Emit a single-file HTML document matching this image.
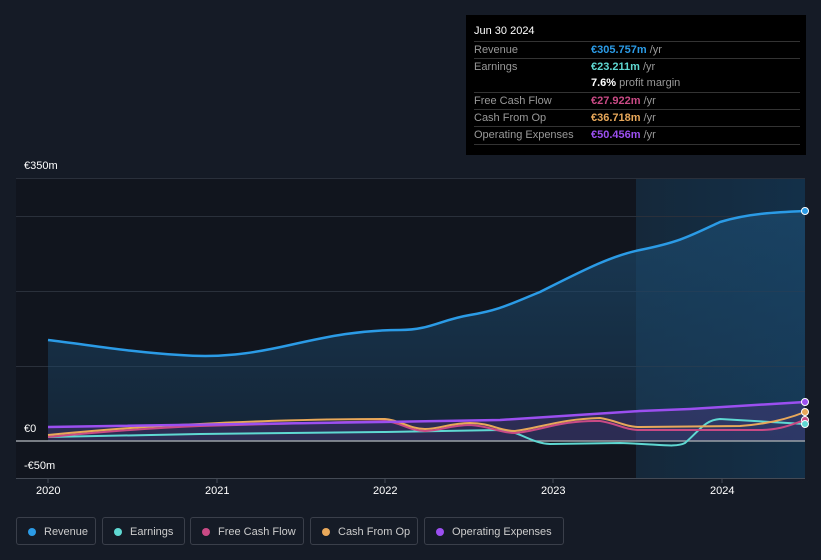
<!DOCTYPE html>
<html><head><style>
body{margin:0;width:821px;height:560px;background:#151b26;font-family:"Liberation Sans",sans-serif;overflow:hidden;position:relative}
.tip{position:absolute;left:466px;top:15px;width:340px;height:140px;background:#000;color:#fff;font-size:11px}
.tip .h{position:absolute;left:8px;top:10px;font-size:11px}
.row{position:absolute;left:8px;width:326px;height:17px;border-top:1px solid #333;line-height:17px;color:#999}
.row span{position:absolute;left:117px}
.lbl{position:absolute;color:#fff;font-size:11px}
.leg{position:absolute;top:517px;height:28px;border:1px solid #3a3f4a;border-radius:3px;color:#ccc;font-size:11px;line-height:28px;box-sizing:border-box;padding-left:27px}
.leg i{position:absolute;left:11px;top:10px;width:8px;height:8px;border-radius:50%}
</style></head><body>
<svg width="821" height="560" style="position:absolute;left:0;top:0">
<rect x="16" y="178" width="620" height="300" fill="#11151e"/>
<defs><linearGradient id="g" x1="0" x2="1"><stop offset="0" stop-color="#15283a"/><stop offset="1" stop-color="#133049"/></linearGradient>
<linearGradient id="rv" x1="0" y1="0" x2="0" y2="1"><stop offset="0" stop-color="#1c4a6e" stop-opacity=".7"/><stop offset="1" stop-color="#1c4a6e" stop-opacity=".3"/></linearGradient></defs>
<rect x="636" y="178" width="169" height="300" fill="url(#g)"/>
<g stroke="#2a303b" stroke-width="1"><line x1="16" x2="805" y1="178.5" y2="178.5"/><line x1="16" x2="805" y1="216.5" y2="216.5"/><line x1="16" x2="805" y1="291.5" y2="291.5"/><line x1="16" x2="805" y1="366.5" y2="366.5"/></g>
<path d="M48,340 C90,345 130,352 180,355 C220,358 250,354 290,345 C330,336 360,330 400,330 C430,330 440,320 470,315 C500,310 510,304 540,292 C580,272 610,256 640,250 C680,242 690,236 720,222 C750,213 780,212 805,211 L805,441 L48,441Z" fill="url(#rv)"/>
<path d="M48,340 C90,345 130,352 180,355 C220,358 250,354 290,345 C330,336 360,330 400,330 C430,330 440,320 470,315 C500,310 510,304 540,292 C580,272 610,256 640,250 C680,242 690,236 720,222 C750,213 780,212 805,211" fill="none" stroke="#2b9be6" stroke-width="2.5"/>
<path d="M48,427 L380,422 L500,420 L640,411 L690,409 L805,402 L805,441 L48,441Z" fill="#5a3a8a" fill-opacity=".35"/>
<line x1="16" x2="805" y1="441" y2="441" stroke="#9aa0a6" stroke-width="1.5"/>
<path d="M48,437 L200,434 L385,432 L500,430 C520,431 530,443 550,444 L620,443 C660,444 675,448 685,443 C700,430 705,420 720,419 L805,424" fill="none" stroke="#5fd8d2" stroke-width="2"/>
<path d="M48,437 C100,432 150,428 200,426 L385,421 C400,422 410,431 425,431 C440,431 450,425 470,425 C490,426 500,433 515,433 C540,431 560,420 600,421 C615,423 625,430 640,430 L760,430 C780,430 790,425 805,420" fill="none" stroke="#c94a85" stroke-width="2"/>
<path d="M48,435 C100,430 150,426 200,424 C250,421 330,419 385,419 C400,420 410,429 425,429 C440,429 450,423 470,423 C490,423 500,431 515,431 C540,428 560,419 600,418 C615,420 625,427 640,427 L740,426 C770,424 790,418 805,412" fill="none" stroke="#e8a85a" stroke-width="2"/>
<path d="M48,427 L380,422 L500,420 L640,411 L690,409 L805,402" fill="none" stroke="#9b4ff0" stroke-width="2.5"/>
<circle cx="805" cy="211" r="3.5" fill="#2b9be6" stroke="#fff"/>
<circle cx="805" cy="402" r="3.5" fill="#9b4ff0" stroke="#fff"/>
<circle cx="805" cy="412" r="3.5" fill="#e8a85a" stroke="#fff"/>
<circle cx="805" cy="420" r="3.5" fill="#c94a85" stroke="#fff"/>
<circle cx="805" cy="424" r="3.5" fill="#5fd8d2" stroke="#fff"/>
<line x1="16" x2="805" y1="478.5" y2="478.5" stroke="#444a55"/>
<g stroke="#444a55"><line x1="48" x2="48" y1="478" y2="483"/><line x1="217" x2="217" y1="478" y2="483"/><line x1="385" x2="385" y1="478" y2="483"/><line x1="553" x2="553" y1="478" y2="483"/><line x1="722" x2="722" y1="478" y2="483"/></g>
</svg>
<div class="lbl" style="left:24px;top:160px">€350m</div>
<div class="lbl" style="left:24px;top:423px">€0</div>
<div class="lbl" style="left:24px;top:460px">-€50m</div>
<div class="lbl" style="left:36px;top:485px">2020</div>
<div class="lbl" style="left:205px;top:485px">2021</div>
<div class="lbl" style="left:373px;top:485px">2022</div>
<div class="lbl" style="left:541px;top:485px">2023</div>
<div class="lbl" style="left:710px;top:485px">2024</div>
<div class="tip">
<div class="h">Jun 30 2024</div>
<div class="row" style="top:26px">Revenue<span style="color:#2b9be6;font-weight:bold">€305.757m <b style="color:#999;font-weight:normal">/yr</b></span></div>
<div class="row" style="top:43px">Earnings<span style="color:#5fd8d2;font-weight:bold">€23.211m <b style="color:#999;font-weight:normal">/yr</b></span></div>
<div class="row" style="top:60px;border:0">&nbsp;<span style="color:#fff;font-weight:bold">7.6% <b style="color:#999;font-weight:normal">profit margin</b></span></div>
<div class="row" style="top:77px">Free Cash Flow<span style="color:#c94a85;font-weight:bold">€27.922m <b style="color:#999;font-weight:normal">/yr</b></span></div>
<div class="row" style="top:94px">Cash From Op<span style="color:#e8a85a;font-weight:bold">€36.718m <b style="color:#999;font-weight:normal">/yr</b></span></div>
<div class="row" style="top:111px">Operating Expenses<span style="color:#9b4ff0;font-weight:bold">€50.456m <b style="color:#999;font-weight:normal">/yr</b></span></div>
<div class="row" style="top:129px;height:0"></div>
</div>
<div class="leg" style="left:16px;width:80px"><i style="background:#2b9be6"></i>Revenue</div>
<div class="leg" style="left:102px;width:83px"><i style="background:#5fd8d2"></i>Earnings</div>
<div class="leg" style="left:190px;width:114px"><i style="background:#c94a85"></i>Free Cash Flow</div>
<div class="leg" style="left:310px;width:108px"><i style="background:#e8a85a"></i>Cash From Op</div>
<div class="leg" style="left:424px;width:140px"><i style="background:#9b4ff0"></i>Operating Expenses</div>
</body></html>
